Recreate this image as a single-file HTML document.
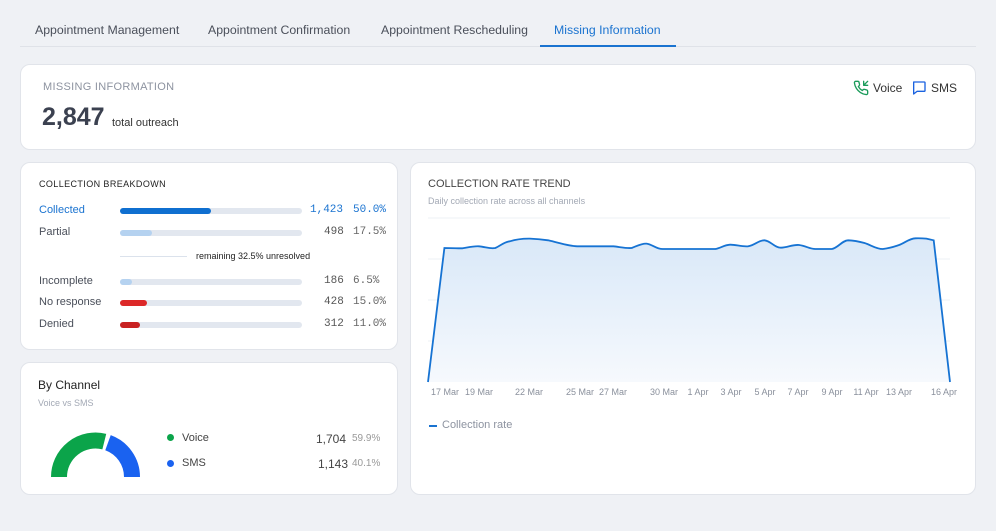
<!DOCTYPE html>
<html><head><meta charset="utf-8"><style>
*{box-sizing:border-box;margin:0;padding:0}
body{width:996px;height:531px;background:#eff1f5;font-family:"Liberation Sans",sans-serif;position:relative;overflow:hidden;color:#333}
.abs{position:absolute}
.tab{position:absolute;top:23px;font-size:12.3px;color:#4a4f5a}
.card{position:absolute;background:#fff;border:1px solid #e1e4ea;border-radius:10px}
.mono{font-family:"Liberation Mono",monospace}
.row{position:absolute;left:38px;width:350px;height:14px;font-size:11px}
.row .l{position:absolute;left:1px;top:0;color:#4a4f5a}
.row .bar{position:absolute;left:82px;top:4px;width:182px;height:6px;border-radius:3px;background:#e2e7ef}
.row .bar i{position:absolute;left:0;top:0;height:6px;border-radius:3px}
.row .n{position:absolute;right:44px;top:0;font-size:11px;color:#555}
.row .p{position:absolute;left:314px;top:0;font-size:11px;color:#666}
.xl{position:absolute;top:387px;font-size:9px;color:#8a909c;transform:translateX(-50%);white-space:nowrap}
</style></head><body>
<div class="abs" style="left:20px;top:46px;width:956px;height:1px;background:#dfe2e8"></div>
<div class="tab" style="left:35px">Appointment Management</div>
<div class="tab" style="left:208px">Appointment Confirmation</div>
<div class="tab" style="left:381px">Appointment Rescheduling</div>
<div class="tab" style="left:554px;color:#1a73d0">Missing Information</div>
<div class="abs" style="left:540px;top:45px;width:136px;height:2px;background:#1a73d0"></div>

<div class="card" style="left:20px;top:64px;width:956px;height:86px">
 <div class="abs" style="left:22px;top:16px;font-size:11px;color:#8d93a0;letter-spacing:.3px">MISSING INFORMATION</div>
 <div class="abs" style="left:21px;top:38px;font-size:25px;font-weight:bold;color:#3b4150">2,847</div>
 <div class="abs" style="left:91px;top:52px;font-size:11px;color:#333">total outreach</div>
 <svg class="abs" style="left:832px;top:15px" width="16" height="16" viewBox="0 0 24 24" fill="none" stroke="#1a9b5a" stroke-width="2" stroke-linecap="round" stroke-linejoin="round"><path d="M16 2v6h6M22 2l-6 6"/><path d="M22 16.9v3a2 2 0 0 1-2.2 2 19.8 19.8 0 0 1-8.6-3.1 19.5 19.5 0 0 1-6-6A19.8 19.8 0 0 1 2.1 4.200 2 2 0 0 1 4.1 2h3a2 2 0 0 1 2 1.7c.1.9.4 1.9.7 2.8a2 2 0 0 1-.5 2.1L8 9.8a16 16 0 0 0 6 6l1.3-1.3a2 2 0 0 1 2.1-.4c.9.3 1.8.6 2.8.7a2 2 0 0 1 1.7 2z"/></svg>
 <div class="abs" style="left:852px;top:16px;font-size:12px;color:#333">Voice</div>
 <svg class="abs" style="left:890px;top:15px" width="16" height="16" viewBox="0 0 24 24" fill="none" stroke="#1a62e0" stroke-width="2" stroke-linejoin="round"><path d="M4 3h16a1 1 0 0 1 1 1v12a1 1 0 0 1-1 1H9l-5 4V4a1 1 0 0 1 1-1z"/></svg>
 <div class="abs" style="left:910px;top:16px;font-size:12px;color:#333">SMS</div>
</div>

<div class="card" style="left:20px;top:162px;width:378px;height:188px">
 <div class="abs" style="left:18px;top:16px;font-size:9px;color:#222;letter-spacing:.4px">COLLECTION BREAKDOWN</div>
</div>
<div class="row" style="top:204px"><span class="l" style="color:#1a73d0">Collected</span><div class="bar"><i style="width:91px;background:#0f6fd0"></i></div><span class="n mono" style="color:#1a73d0;right:auto;left:272px">1,423</span><span class="p mono" style="color:#1a73d0;left:315px">50.0%</span></div>
<div class="row" style="top:226px"><span class="l">Partial</span><div class="bar"><i style="width:32px;background:#b5d2f0"></i></div><span class="n mono" style="left:286px;right:auto">498</span><span class="p mono" style="left:315px">17.5%</span></div>
<div class="abs" style="left:120px;top:256px;width:67px;height:1px;background:#dbe2ec"></div>
<div class="abs" style="left:196px;top:251px;font-size:9px;color:#222">remaining 32.5% unresolved</div>
<div class="row" style="top:275px"><span class="l">Incomplete</span><div class="bar"><i style="width:12px;background:#b5d2f0"></i></div><span class="n mono" style="left:286px;right:auto">186</span><span class="p mono" style="left:315px">6.5%</span></div>
<div class="row" style="top:296px"><span class="l">No response</span><div class="bar"><i style="width:27px;background:#dc2828"></i></div><span class="n mono" style="left:286px;right:auto">428</span><span class="p mono" style="left:315px">15.0%</span></div>
<div class="row" style="top:318px"><span class="l">Denied</span><div class="bar"><i style="width:20px;background:#c82222"></i></div><span class="n mono" style="left:286px;right:auto">312</span><span class="p mono" style="left:315px">11.0%</span></div>

<div class="card" style="left:20px;top:362px;width:378px;height:133px">
 <div class="abs" style="left:17px;top:15px;font-size:12px;color:#222">By Channel</div>
 <div class="abs" style="left:17px;top:35px;font-size:9px;color:#a3a9b5">Voice vs SMS</div>
 <div class="abs" style="left:146px;top:71px;width:7px;height:7px;border-radius:50%;background:#0ba44a"></div>
 <div class="abs" style="left:161px;top:69px;font-size:11px;color:#444">Voice</div>
 <div class="abs" style="left:146px;top:97px;width:7px;height:7px;border-radius:50%;background:#1a62f0"></div>
 <div class="abs" style="left:161px;top:94px;font-size:11px;color:#444">SMS</div>
 <div class="abs" style="left:295px;top:69px;font-size:12px;color:#444">1,704</div>
 <div class="abs" style="left:331px;top:70px;font-size:10px;color:#999">59.9%</div>
 <div class="abs" style="left:297px;top:94px;font-size:12px;color:#444">1,143</div>
 <div class="abs" style="left:331px;top:95px;font-size:10px;color:#999">40.1%</div>
</div>
<svg class="abs" style="left:0;top:0" width="200" height="531">
 <path d="M59 477 A36.5 36.5 0 0 1 104.3 441.6" fill="none" stroke="#0ba44a" stroke-width="16"/>
 <path d="M108 442.7 A36.5 36.5 0 0 1 132 477" fill="none" stroke="#1a62f0" stroke-width="16"/>
</svg>

<div class="card" style="left:410px;top:162px;width:566px;height:333px">
 <div class="abs" style="left:17px;top:15px;font-size:11px;color:#444">COLLECTION RATE TREND</div>
 <div class="abs" style="left:17px;top:33px;font-size:9px;color:#a3a9b5">Daily collection rate across all channels</div>
 <div class="abs" style="left:18px;top:262px;width:8px;height:2px;background:#1a73d0"></div>
 <div class="abs" style="left:31px;top:256px;font-size:11px;color:#8d93a0">Collection rate</div>
</div>
<svg class="abs" style="left:0;top:0" width="996" height="531">
 <defs><linearGradient id="g" x1="0" y1="0" x2="0" y2="1"><stop offset="0" stop-color="#d9e8f8"/><stop offset="1" stop-color="#f6f9fd"/></linearGradient></defs>
 <g stroke="#eef1f5" stroke-width="1"><line x1="428" x2="950" y1="218" y2="218"/><line x1="428" x2="950" y1="259" y2="259"/><line x1="428" x2="950" y1="300" y2="300"/><line x1="428" x2="950" y1="341" y2="341"/></g>
 <path d="M428 382 L444.4 248 C455 248 458 248.5 462.6 248.3 C470 247 474 246 478.9 246.3 C486 247 490 249 495.3 248 C500 246 504 242 509.9 241.3 C517 239 523 238.5 529.9 238.6 C537 239 542 239.5 548.1 240.3 C560 243 568 246 577.2 246.3 L613.5 246.3 C620 247 626 248.5 631.7 248 C637 246 641 243.5 646.3 243.6 C652 244 656 249 662.7 249 L715.4 249 C721 248 724 245 730 244.7 C736 244.5 742 247 748.2 246.3 C755 245 759 240 764.5 240.3 C771 241 774 247.5 780.9 247.7 C788 247.5 792 244.5 799.1 245 C806 246 810 249 815.4 249 L831.8 249 C838 248 842 240.5 848.2 240.3 C855 240.5 859 241.5 864.5 243 C871 245 876 249 882.8 249 C889 248.5 893 247 899.1 245 C905 243 909 238.5 915.5 238.3 C920 238.2 924 238.4 926.4 238.6 L933.7 240.3 L950 382 Z" fill="url(#g)" stroke="none"/>
 <path d="M428 382 L444.4 248 C455 248 458 248.5 462.6 248.3 C470 247 474 246 478.9 246.3 C486 247 490 249 495.3 248 C500 246 504 242 509.9 241.3 C517 239 523 238.5 529.9 238.6 C537 239 542 239.5 548.1 240.3 C560 243 568 246 577.2 246.3 L613.5 246.3 C620 247 626 248.5 631.7 248 C637 246 641 243.5 646.3 243.6 C652 244 656 249 662.7 249 L715.4 249 C721 248 724 245 730 244.7 C736 244.5 742 247 748.2 246.3 C755 245 759 240 764.5 240.3 C771 241 774 247.5 780.9 247.7 C788 247.5 792 244.5 799.1 245 C806 246 810 249 815.4 249 L831.8 249 C838 248 842 240.5 848.2 240.3 C855 240.5 859 241.5 864.5 243 C871 245 876 249 882.8 249 C889 248.5 893 247 899.1 245 C905 243 909 238.5 915.5 238.3 C920 238.2 924 238.4 926.4 238.6 L933.7 240.3 L950 382" fill="none" stroke="#1673d3" stroke-width="1.8"/>
</svg>
<div class="xl" style="left:445px">17 Mar</div><div class="xl" style="left:479px">19 Mar</div><div class="xl" style="left:529px">22 Mar</div><div class="xl" style="left:580px">25 Mar</div><div class="xl" style="left:613px">27 Mar</div><div class="xl" style="left:664px">30 Mar</div><div class="xl" style="left:698px">1 Apr</div><div class="xl" style="left:731px">3 Apr</div><div class="xl" style="left:765px">5 Apr</div><div class="xl" style="left:798px">7 Apr</div><div class="xl" style="left:832px">9 Apr</div><div class="xl" style="left:866px">11 Apr</div><div class="xl" style="left:899px">13 Apr</div><div class="xl" style="left:944px">16 Apr</div>
</body></html>
